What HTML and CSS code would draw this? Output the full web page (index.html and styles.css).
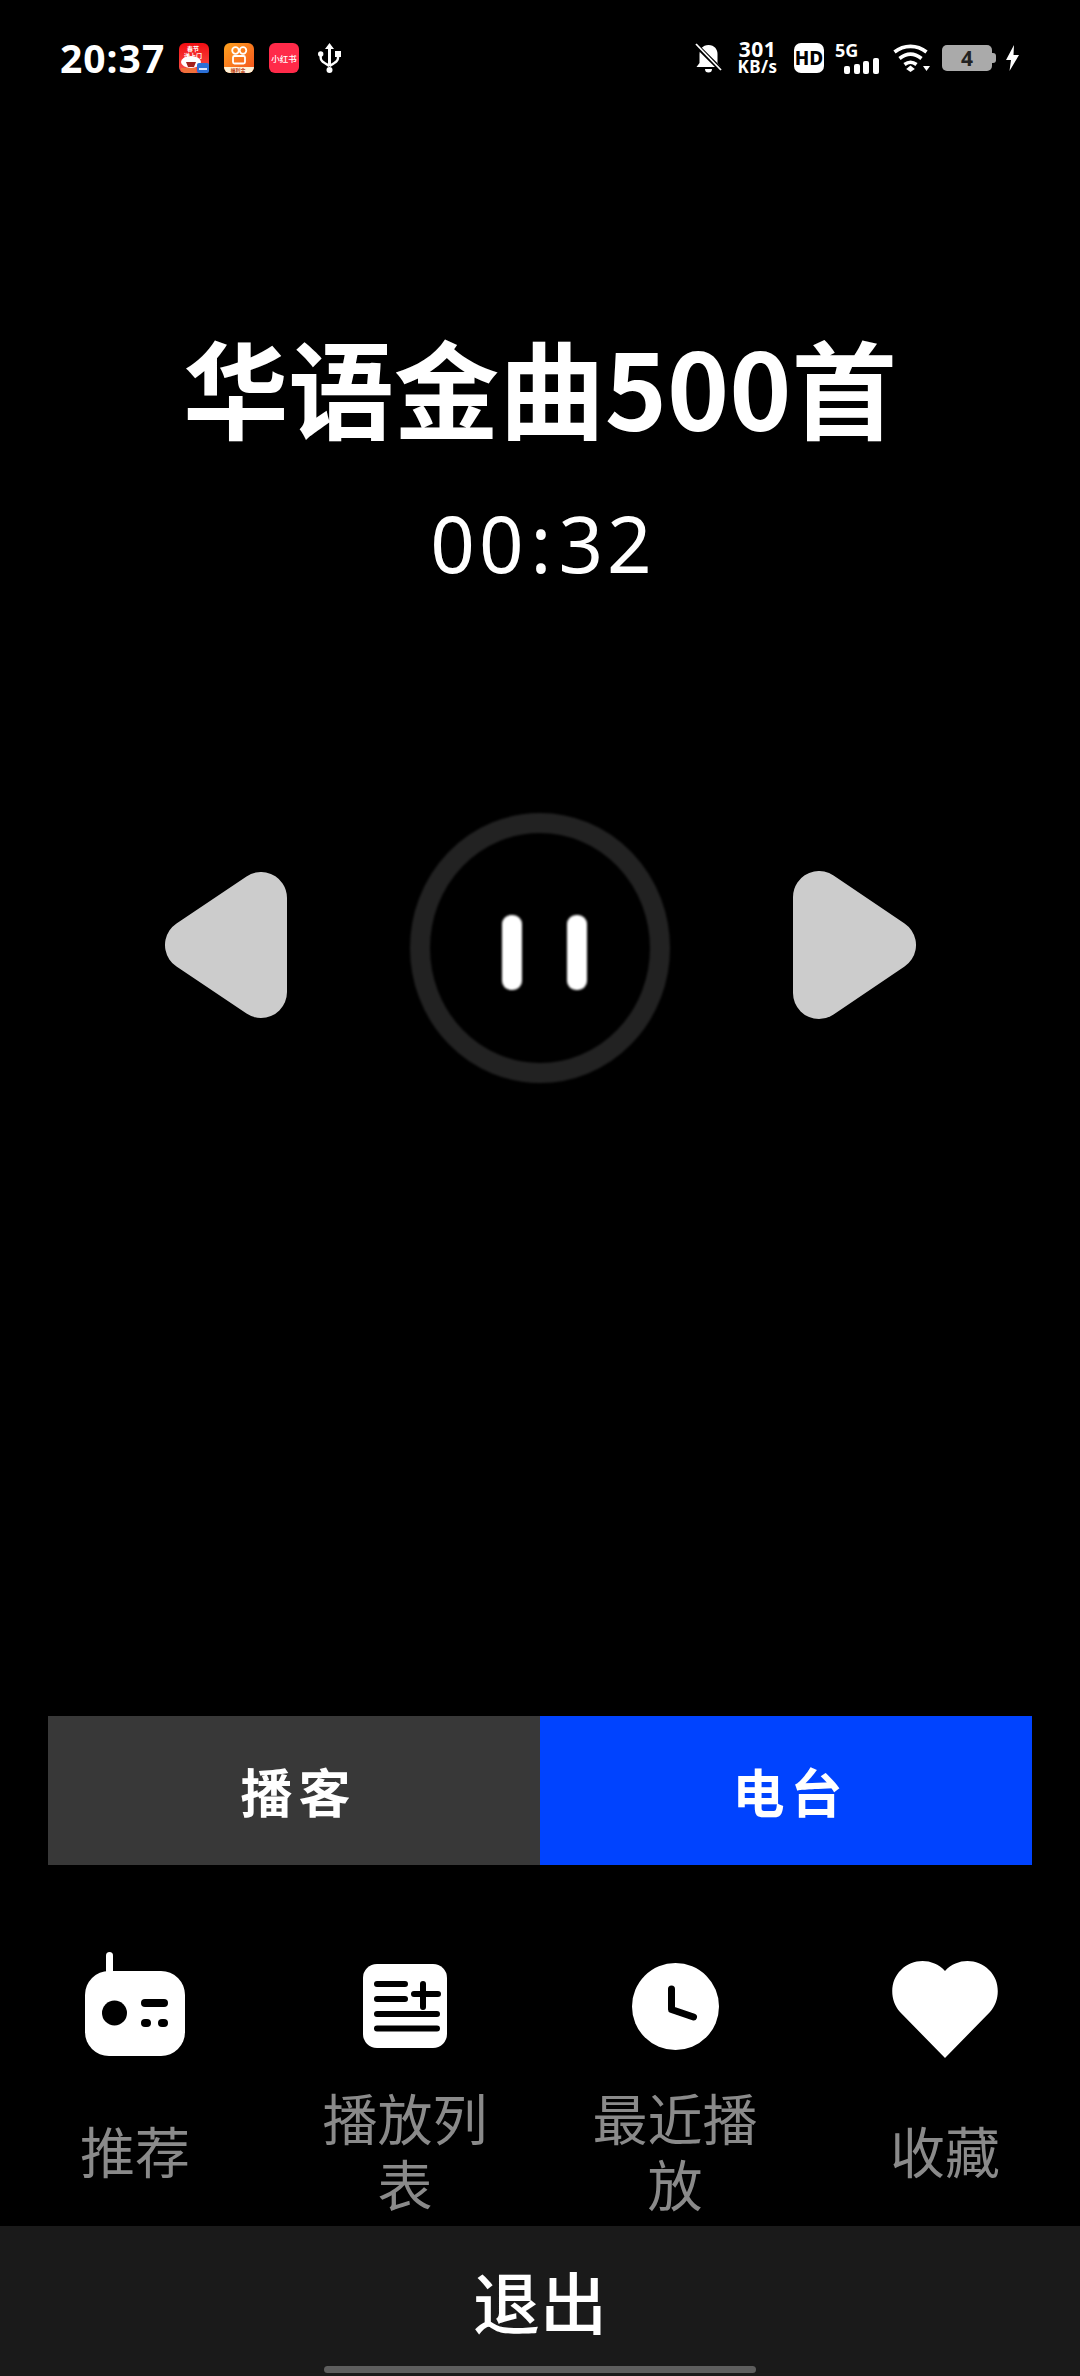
FILE: index.html
```html
<!DOCTYPE html>
<html lang="zh">
<head>
<meta charset="utf-8">
<title>华语金曲500首</title>
<link rel="stylesheet" href="styles.css">
</head>
<body>
<div class="screen">
  <header class="status">
    <div class="status-left">
      <span class="clock">20:37</span>
      <svg class="app" viewBox="0 0 30 30"><defs><linearGradient id="g1" x1="0" y1="0" x2="0" y2="1"><stop offset="0" stop-color="#f20d12"/><stop offset="1" stop-color="#f8554a"/></linearGradient></defs><rect width="30" height="30" rx="6" fill="url(#g1)"/><text x="14" y="8" class="app-t">春节</text><text x="14" y="15" class="app-t">送上门</text><ellipse cx="12" cy="19" rx="10" ry="6" fill="#fff"/><path d="M7 19h10l-2 5h-6z" fill="#a3201c"/><path d="M2 25h15v5H6a6 6 0 0 1-4-3z" fill="#f0703a"/><rect x="18" y="20" width="12" height="10" rx="2" fill="#2b6fd6"/><rect x="20" y="25" width="8" height="2" fill="#dfeaff"/></svg>
      <svg class="app" viewBox="0 0 30 30"><defs><linearGradient id="g2" x1="0" y1="0" x2="1" y2="1"><stop offset="0" stop-color="#ffa21f"/><stop offset="1" stop-color="#f4511e"/></linearGradient></defs><rect width="30" height="30" rx="6" fill="url(#g2)"/><circle cx="11.500" cy="7.500" r="3.300" fill="none" stroke="#fff" stroke-width="1.800"/><circle cx="19" cy="7.500" r="3.300" fill="none" stroke="#fff" stroke-width="1.800"/><rect x="9" y="13" width="12" height="7.500" rx="1.500" fill="none" stroke="#fff" stroke-width="1.800"/><path d="M0 24h30a6 6 0 0 1-6 6H6a6 6 0 0 1-6-6z" fill="#fff3d8"/><text x="14" y="29" class="app-t2">福利金</text></svg>
      <svg class="app" viewBox="0 0 30 30"><rect width="30" height="30" rx="6" fill="#ff2a49"/><text x="15" y="18.500" class="app-t3">小红书</text></svg>
      <svg class="usb" viewBox="0 0 23 30"><path d="M11.500 0l4.500 6h-3v17h-3V6H7z" fill="#fff"/><circle cx="11.500" cy="27" r="3" fill="#fff"/><circle cx="2.700" cy="11" r="2.700" fill="#fff"/><rect x="17" y="8" width="6" height="6" fill="#fff"/><path d="M2.700 12v3c0 3 2 4 8.800 8M20 13v2c0 3-2 4-8.500 8" fill="none" stroke="#fff" stroke-width="2.400"/></svg>
    </div>
    <div class="status-right">
      <svg class="bell" viewBox="0 0 27 30"><path d="M13.500 2c6 0 9 4.500 9 9v9l3 4H1.500l3-4v-9c0-4.500 3-9 9-9zM10 26h7a3.500 3.500 0 0 1-7 0z" fill="#fff"/><path d="M0 1l27 27" stroke="#000" stroke-width="4.500"/><path d="M1 1l25 26" stroke="#fff" stroke-width="1.800"/></svg>
      <div class="speed"><span>301</span><span class="speed-unit">KB/s</span></div>
      <div class="hd">HD</div>
      <div class="net">
        <span class="net-label">5G</span>
        <div class="bars"><i class="bar b1"></i><i class="bar b2"></i><i class="bar b3"></i><i class="bar b4"></i></div>
      </div>
      <svg class="wifi" viewBox="0 0 37 28"><path d="M1.500 8C11 .5 24 .5 33.500 8M6.500 14.500c7-5.500 15-5.500 22 0M11.500 20.500c4-3 8-3 12 0" fill="none" stroke="#fff" stroke-width="3.600"/><path d="M17.500 21.500l4.300 3.500-4.300 3-4.300-3z" fill="#fff"/><path d="M30 22h7l-3.500 5z" fill="#fff"/></svg>
      <div class="battery"><div class="batt-body">4</div><div class="batt-cap"></div></div>
      <svg class="bolt" viewBox="0 0 13 26"><path d="M8 0L0 15h5l-1.500 11L13 10H7.500z" fill="#fff"/></svg>
    </div>
  </header>

  <main class="player">
    <h1 class="title">华语金曲500首</h1>
    <div class="time">00<span class="colon">:</span>32</div>
    <div class="controls">
      <svg class="prev" viewBox="0 0 122 146"><path d="M26 73L96 26V120Z" class="tri"/></svg>
      <div class="pause">
        <svg class="ring" viewBox="0 0 260 270"><ellipse cx="130" cy="135" rx="120" ry="125" fill="none" stroke="#222" stroke-width="20"/></svg>
        <i class="pause-bar"></i><i class="pause-bar"></i>
      </div>
      <svg class="next" viewBox="0 0 123 148"><path d="M97 74L26 26V122Z" class="tri"/></svg>
    </div>
  </main>

  <div class="tabs">
    <div class="tab tab-off">播客</div>
    <div class="tab tab-on">电台</div>
  </div>

  <nav class="nav">
    <div class="nav-item">
      <div class="nav-icon">
        <svg class="ic-radio" viewBox="0 0 100 104"><rect x="21" y="0" width="7" height="24" rx="3.500" fill="#fff"/><rect x="0" y="19" width="100" height="85" rx="24" fill="#fff"/><circle cx="29.500" cy="61" r="12.500" fill="#000"/><rect x="56" y="47" width="27" height="8" rx="4" fill="#000"/><rect x="56" y="67" width="10" height="8" rx="4" fill="#000"/><rect x="73" y="67" width="10" height="8" rx="4" fill="#000"/></svg>
      </div>
      <div class="nav-label">推荐</div>
    </div>
    <div class="nav-item">
      <div class="nav-icon">
        <svg class="ic-list" viewBox="0 0 84 84"><rect width="84" height="84" rx="14" fill="#fff"/><g stroke="#000" stroke-width="6" stroke-linecap="round"><path d="M14 20h28M14 35h28M14 50h60M14 64.500h60M51 30h24M60 20v23"/></g></svg>
      </div>
      <div class="nav-label">播放列表</div>
    </div>
    <div class="nav-item">
      <div class="nav-icon">
        <svg class="ic-clock" viewBox="0 0 87 87"><circle cx="43.500" cy="43.500" r="43.500" fill="#fff"/><path d="M39.500 26v20.500l22 7.500" fill="none" stroke="#000" stroke-width="7" stroke-linecap="round" stroke-linejoin="round"/></svg>
      </div>
      <div class="nav-label">最近播放</div>
    </div>
    <div class="nav-item">
      <div class="nav-icon">
        <svg class="ic-heart" viewBox="0 0 106 97"><path d="M53 97L8 51C-3 39-2 19 9 9 21-3 41-3 53 10 65-3 85-3 97 9c11 10 12 30 1 42z" fill="#fff"/></svg>
      </div>
      <div class="nav-label">收藏</div>
    </div>
  </nav>

  <footer class="exit">退出</footer>
  <div class="home"></div>
</div>
</body>
</html>
```
FILE: styles.css
```css
* { box-sizing: border-box; }
html, body { margin: 0; background: #000; }
body { font-family: "Noto Sans CJK SC", "Noto Sans", sans-serif; color: #fff; }
.screen { position: relative; width: 1080px; height: 2376px; overflow: hidden; display: flex; flex-direction: column; background: #000; }

.status { height: 116px; padding: 0 61px 0 60px; display: flex; justify-content: space-between; align-items: center; }
.status-left, .status-right { display: flex; align-items: center; }
.clock { font-family: "Noto Sans", sans-serif; font-size: 39px; font-weight: 700; line-height: 40px; width: 119px; letter-spacing: 1px; }
.app { width: 30px; height: 30px; margin-right: 15px; display: block; }
.app-t { font-size: 6px; fill: #fff; text-anchor: middle; font-weight: 700; }
.app-t2 { font-size: 5px; fill: #c0431a; text-anchor: middle; font-weight: 700; }
.app-t3 { font-size: 8.500px; fill: #fff; text-anchor: middle; font-weight: 500; }
.usb { width: 23px; height: 30px; margin-left: 4px; display: block; }

.bell { width: 27px; height: 30px; display: block; margin-right: 14px; }
.speed { width: 43px; margin-right: 15px; display: flex; flex-direction: column; align-items: center; font-family: "Noto Sans", sans-serif; font-weight: 700; font-size: 21px; line-height: 17px; letter-spacing: .5px; }
.speed-unit { font-size: 17px; }
.hd { width: 30px; height: 30px; border-radius: 7px; background: #fff; color: #000; font-family: "Noto Sans", sans-serif; font-weight: 800; font-size: 19px; line-height: 30px; text-align: center; margin-right: 11px; }
.net { width: 45px; height: 32px; margin-right: 13px; position: relative; display: flex; flex-direction: column; }
.net-label { font-family: "Noto Sans", sans-serif; font-weight: 700; font-size: 18px; line-height: 16px; }
.bars { display: flex; align-items: flex-end; gap: 3.500px; height: 16px; margin-left: 9px; }
.bar { width: 6px; background: #fff; border-radius: 2px; display: block; }
.b1 { height: 8px; } .b2 { height: 10px; } .b3 { height: 13px; } .b4 { height: 16px; }
.wifi { width: 37px; height: 28px; margin-right: 12px; display: block; }
.battery { display: flex; align-items: center; margin-right: 10px; }
.batt-body { width: 50px; height: 26px; border-radius: 5px; background: #aaa; color: #222; font-family: "Noto Sans", sans-serif; font-weight: 700; font-size: 21px; line-height: 26px; text-align: center; }
.batt-cap { width: 4px; height: 10px; background: #aaa; border-radius: 0 3px 3px 0; }
.bolt { width: 13px; height: 26px; display: block; }

.player { display: flex; flex-direction: column; align-items: center; }
.title { margin: 196px 0 0; font-size: 105.500px; font-weight: 700; line-height: 146px; text-align: center; }
.time { margin-top: 35px; padding-left: 6px; font-size: 78px; line-height: 100px; letter-spacing: 4px; font-family: "Noto Sans", sans-serif; }
.colon { margin: 0 3px; }
.controls { margin-top: 220px; display: flex; align-items: center; gap: 123px; }
.prev { width: 122px; height: 146px; display: block; margin-bottom: 6px; }
.next { width: 123px; height: 148px; display: block; margin-bottom: 6px; }
.tri { fill: #ccc; stroke: #ccc; stroke-width: 52; stroke-linejoin: round; }
.pause { position: relative; width: 260px; height: 270px; display: flex; justify-content: center; align-items: center; gap: 45px; padding: 9px 0 0 9px; }
.ring { position: absolute; inset: 0; width: 260px; height: 270px; filter: blur(.8px); }
.pause-bar { width: 20px; height: 75px; border-radius: 9px; background: #fff; filter: blur(1px); display: block; }

.tabs { margin: 633px 48px 0; height: 149px; display: flex; }
.tab { flex: 1; display: flex; align-items: center; justify-content: center; font-size: 52px; font-weight: 700; letter-spacing: 6px; padding-left: 9px; }
.tab-off { background: #383838; }
.tab-on { background: #0043ff; }

.nav { margin-top: 86px; display: grid; grid-template-columns: repeat(4, 270px); height: 275px; }
.nav-item { display: flex; flex-direction: column; align-items: center; }
.nav-icon { height: 112px; width: 100%; display: flex; justify-content: center; align-items: center; }
.nav-label { flex: 1; width: 170px; padding-top: 9px; display: flex; align-items: center; justify-content: center; text-align: center; font-size: 55px; line-height: 66px; color: #8a8a8a; }
.ic-radio { width: 100px; height: 104px; display: block; margin-bottom: 6px; }
.ic-list { width: 84px; height: 84px; display: block; margin-bottom: 2px; }
.ic-clock { width: 87px; height: 87px; display: block; margin-bottom: 2px; }
.ic-heart { width: 106px; height: 97px; display: block; margin-top: 5px; }

.exit { flex: 1; background: #1a1a1a; display: flex; align-items: center; justify-content: center; font-size: 67px; font-weight: 500; line-height: 146px; padding-bottom: 2px; }
.home { position: absolute; left: 324px; bottom: 3px; width: 432px; height: 7px; border-radius: 4px; background: #5e5e5e; }
```
